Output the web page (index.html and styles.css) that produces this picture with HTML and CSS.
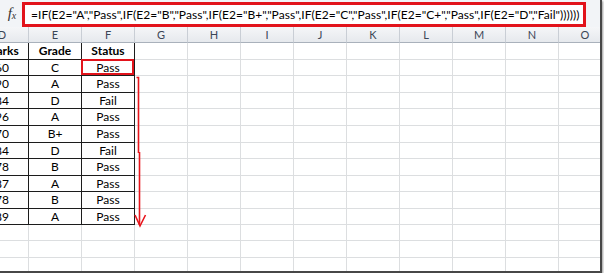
FILE: index.html
```html
<!DOCTYPE html>
<html lang="en">
<head>
    <meta charset="UTF-8">
    <title>Nested IF formula</title>
    <link rel="stylesheet" href="styles.css">
</head>
<body>

<div class="frame">
    <!-- Barra de formula -->
    <div class="formula-bar">
        <div class="fx-label"><i>f</i><i class="x">x</i></div>
        <div class="formula">=IF(E2="A","Pass",IF(E2="B","Pass",IF(E2="B+","Pass",IF(E2="C","Pass",IF(E2="C+","Pass",IF(E2="D","Fail"))))))</div>
    </div>

    <!-- Hoja -->
    <div class="grid">
        <div class="h">D</div><div class="h">E</div><div class="h">F</div><div class="h">G</div><div class="h">H</div><div class="h">I</div><div class="h">J</div><div class="h">K</div><div class="h">L</div><div class="h">M</div><div class="h">N</div><div class="h">O</div>

        <div class="t b">Marks</div><div class="t b">Grade</div><div class="t b">Status</div><div></div><div></div><div></div><div></div><div></div><div></div><div></div><div></div><div></div>
        <div class="t">60</div><div class="t">C</div><div class="t sel">Pass</div><div></div><div></div><div></div><div></div><div></div><div></div><div></div><div></div><div></div>
        <div class="t">90</div><div class="t">A</div><div class="t">Pass</div><div></div><div></div><div></div><div></div><div></div><div></div><div></div><div></div><div></div>
        <div class="t">84</div><div class="t">D</div><div class="t">Fail</div><div></div><div></div><div></div><div></div><div></div><div></div><div></div><div></div><div></div>
        <div class="t">96</div><div class="t">A</div><div class="t">Pass</div><div></div><div></div><div></div><div></div><div></div><div></div><div></div><div></div><div></div>
        <div class="t">70</div><div class="t">B+</div><div class="t">Pass</div><div></div><div></div><div></div><div></div><div></div><div></div><div></div><div></div><div></div>
        <div class="t">84</div><div class="t">D</div><div class="t">Fail</div><div></div><div></div><div></div><div></div><div></div><div></div><div></div><div></div><div></div>
        <div class="t">78</div><div class="t">B</div><div class="t">Pass</div><div></div><div></div><div></div><div></div><div></div><div></div><div></div><div></div><div></div>
        <div class="t">87</div><div class="t">A</div><div class="t">Pass</div><div></div><div></div><div></div><div></div><div></div><div></div><div></div><div></div><div></div>
        <div class="t">78</div><div class="t">B</div><div class="t">Pass</div><div></div><div></div><div></div><div></div><div></div><div></div><div></div><div></div><div></div>
        <div class="t">89</div><div class="t">A</div><div class="t">Pass</div><div></div><div></div><div></div><div></div><div></div><div></div><div></div><div></div><div></div>

        <div></div><div></div><div></div><div></div><div></div><div></div><div></div><div></div><div></div><div></div><div></div><div></div>
        <div></div><div></div><div></div><div></div><div></div><div></div><div></div><div></div><div></div><div></div><div></div><div></div>
        <div></div><div></div><div></div><div></div><div></div><div></div><div></div><div></div><div></div><div></div><div></div><div></div>
    </div>

    <!-- Flecha roja dibujada a mano -->
    <svg class="arrow" width="160" height="240" viewBox="0 0 160 240">
        <path d="M136.5 77.5 H138.5 V153" />
        <path d="M139.5 152 V225" />
        <path d="M135 215 L140 226 L145.5 215" />
    </svg>
</div>

</body>
</html>
```

FILE: styles.css
```css
/* Estilos generales */
body {
    margin: 0;
    background-color: #fff;
    font-family: Lato, "Liberation Sans", sans-serif;
}

.frame {
    position: relative;
    width: 600px;
    height: 271px;
    overflow: hidden;
    background-color: #fff;
    border-right: 2px solid #474747;
    border-bottom: 2px solid #474747;
    box-shadow: 1px 1px 2px rgba(0, 0, 0, 0.4);
}

/* Barra de formula */
.formula-bar {
    display: flex;
    height: 27px;
    background-color: #f2f4f7;
}

.fx-label {
    width: 22px;
    display: flex;
    align-items: center;
    justify-content: center;
    padding-left: 2px;
    box-sizing: border-box;
    font-family: "Liberation Serif", serif;
    font-size: 15px;
    color: #333;
}

.fx-label .x {
    font-size: 10px;
    margin-top: 4px;
}

.formula {
    box-sizing: border-box;
    width: 564px;
    height: 25px;
    margin-top: 2px;
    padding-left: 6px;
    border: 3px solid #e2131b;
    background-color: #fff;
    display: flex;
    align-items: center;
    font-size: 12px;
    letter-spacing: 0.05px;
    color: #000;
    white-space: nowrap;
    overflow: hidden;
}

/* Hoja */
.grid {
    display: grid;
    grid-template-columns: repeat(12, 53px);
    grid-template-rows: 16px 17px 16px 17px 16px 17px 17px 16px 17px 16px 17px 16px 16px 17px 16px;
    margin-left: -24px;
    font-size: 12px;
    color: #000;
}

.grid > div {
    box-sizing: border-box;
    border-right: 1px solid #dcdee0;
    border-bottom: 1px solid #dcdee0;
    display: flex;
    align-items: center;
    justify-content: center;
    line-height: 1;
}

.grid > .h {
    background: linear-gradient(#f5f6f8, #e6e9ed);
    border-right-color: #c9ced5;
    border-bottom-color: #a9b1bb;
    color: #3b4656;
    font-size: 11px;
}

.grid > .t {
    border-right-color: #1c1c1c;
    border-bottom-color: #1c1c1c;
}

.grid > .b {
    font-weight: bold;
}

.sel {
    position: relative;
}

.sel::after {
    content: "";
    position: absolute;
    top: -1px;
    left: -1px;
    right: 0;
    bottom: 0;
    border: 2px solid #e2131b;
}

.arrow {
    position: absolute;
    top: 0;
    left: 0;
    pointer-events: none;
}

.arrow path {
    fill: none;
    stroke: #e8141b;
    stroke-width: 1.6;
}
```
